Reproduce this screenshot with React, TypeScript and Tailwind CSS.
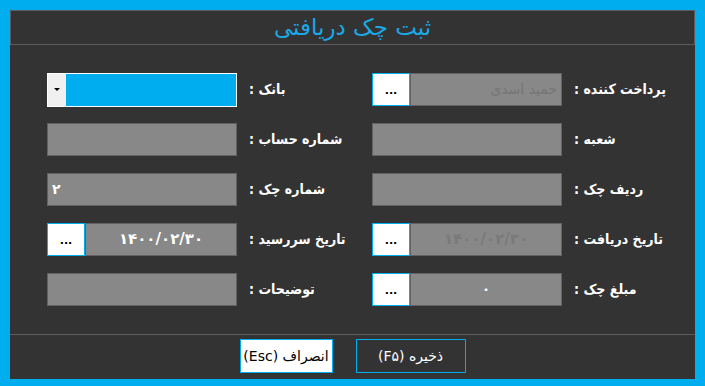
import React from "react"

const FONT = { fontFamily: '"DejaVu Sans", "Noto Sans", sans-serif' }
const COND = { fontFamily: '"DejaVu Sans Condensed", "DejaVu Sans", sans-serif' }

function Field({ children }: { children?: React.ReactNode }) {
  return (
    <div className="w-[190px] h-[33px] bg-[#888888] border border-[#626262] flex items-center justify-center text-[14px] font-bold">
      {children}
    </div>
  )
}

function PickField({ children }: { children?: React.ReactNode }) {
  return (
    <div className="w-[190px] h-[33px] flex">
      <button className="w-[38px] h-[33px] bg-white border border-[#00adef] text-[11px] font-bold text-black leading-none flex items-end justify-center pb-[9px]">
        ...
      </button>
      <div className="flex-1 bg-[#888888] border border-[#626262] flex items-center justify-center text-[14px] font-bold">
        {children}
      </div>
    </div>
  )
}

function Label({ text }: { text: string }) {
  return (
    <span dir="rtl" className="ml-[12px] text-white text-[14px] font-bold whitespace-nowrap" style={COND}>
      {text}
    </span>
  )
}

function Row({ left, leftLabel, right, rightLabel }: { left: React.ReactNode; leftLabel: string; right: React.ReactNode; rightLabel: string }) {
  return (
    <div className="flex h-[33px] items-center">
      <div className="w-[325px] flex items-center">
        {left}
        <Label text={leftLabel} />
      </div>
      <div className="flex items-center">
        {right}
        <Label text={rightLabel} />
      </div>
    </div>
  )
}

export default function App() {
  return (
    <div className="w-[705px] h-[386px] bg-[#00adef] pt-[10px] px-[10px] pb-[7px]" style={FONT}>
      <div className="h-full bg-[#333333] flex flex-col">
        {/* title */}
        <div className="h-[35px] border border-[#5c5c5c] flex items-center justify-center">
          <span dir="rtl" className="text-[#1ba8e6] text-[23px] leading-none">ثبت چک دریافتی</span>
        </div>

        {/* form */}
        <div className="flex-1 pt-[28px] pl-[37px] flex flex-col gap-[17px]">
          <Row
            left={
              <div className="w-[190px] h-[34px] border border-white flex">
                <div className="w-[18px] bg-[#f0f0f0] flex items-center justify-center">
                  <span className="block w-0 h-0 border-l-[3px] border-r-[3px] border-t-[3px] border-l-transparent border-r-transparent border-t-black" />
                </div>
                <div className="flex-1 bg-[#00adef]" />
              </div>
            }
            leftLabel="بانک :"
            right={
              <PickField>
                <span dir="rtl" className="w-full text-right pr-[4px] text-[#757575] font-normal">حمید اسدی</span>
              </PickField>
            }
            rightLabel="پرداخت کننده :"
          />
          <Row left={<Field />} leftLabel="شماره حساب :" right={<Field />} rightLabel="شعبه :" />
          <Row
            left={
              <Field>
                <span className="w-full text-left pl-[4px] text-white">۲</span>
              </Field>
            }
            leftLabel="شماره چک :"
            right={<Field />}
            rightLabel="ردیف چک :"
          />
          <Row
            left={
              <PickField>
                <span className="text-white text-[15px] tracking-[5px]">۱۴۰۰/۰۲/۳۰</span>
              </PickField>
            }
            leftLabel="تاریخ سررسید :"
            right={
              <PickField>
                <span className="text-[#7a7a7a] text-[15px] tracking-[5px]">۱۴۰۰/۰۲/۳۰</span>
              </PickField>
            }
            rightLabel="تاریخ دریافت :"
          />
          <Row
            left={<Field />}
            leftLabel="توضیحات :"
            right={
              <PickField>
                <span className="text-white">۰</span>
              </PickField>
            }
            rightLabel="مبلغ چک :"
          />
        </div>

        {/* footer */}
        <div className="h-[45px] border-t border-[#5c5c5c] flex justify-center gap-[23px] pt-[4px]">
          <button dir="rtl" className="w-[93px] h-[34px] bg-white border border-[#00adef] text-black text-[14px]">
            انصراف (Esc)
          </button>
          <button dir="rtl" className="w-[110px] h-[34px] bg-[#333333] border border-[#00adef] text-white text-[14px]">
            ذخیره (F۵)
          </button>
        </div>
      </div>
    </div>
  )
}
